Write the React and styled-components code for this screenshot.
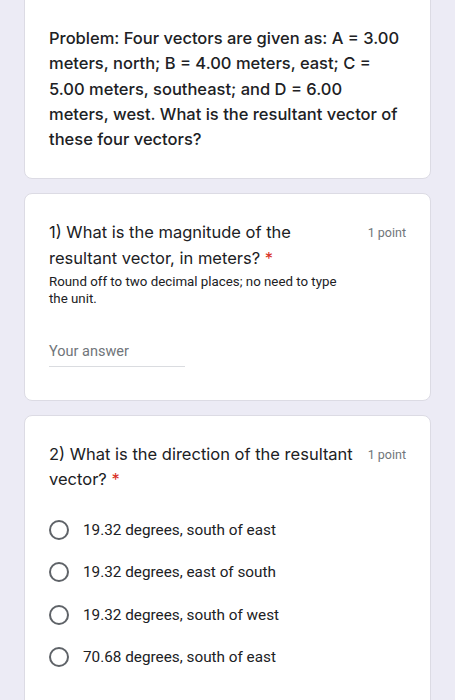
import React from 'react';
import styled, { createGlobalStyle } from 'styled-components';

const GlobalStyle = createGlobalStyle`
  html, body {
    margin: 0;
    padding: 0;
    background: #ecebf5;
  }
  body {
    font-family: 'Inter', 'Roboto', sans-serif;
    overflow: hidden;
  }
`;

const Page = styled.div`
  width: 455px;
  height: 700px;
  padding: 0 24px;
  box-sizing: border-box;
  display: flex;
  flex-direction: column;
  gap: 14px;
  overflow: hidden;
`;

const Card = styled.div`
  background: #ffffff;
  border: 1px solid #dcdbe4;
  border-radius: 8px;
  padding: ${(p) => p.$pad || '24px'};
  margin-top: ${(p) => p.$offset || '0'};
  flex-shrink: 0;
`;

const ProblemText = styled.div`
  font-family: 'Inter', sans-serif;
  font-size: 16.5px;
  font-weight: 500;
  line-height: 25.3px;
  color: #202124;
`;

const TitleRow = styled.div`
  display: flex;
  align-items: flex-start;
  justify-content: space-between;
  gap: 14px;
`;

const Title = styled.div`
  font-family: 'Inter', sans-serif;
  font-size: 16.5px;
  font-weight: 400;
  line-height: 25.3px;
  color: #202124;
  flex: 1;
`;

const Star = styled.span`
  color: #d93025;
`;

const Points = styled.div`
  font-family: 'Roboto', sans-serif;
  font-size: 12.5px;
  color: #70757a;
  line-height: 25.3px;
  white-space: nowrap;
`;

const Description = styled.div`
  font-family: 'Roboto', sans-serif;
  font-size: 13.3px;
  line-height: 17px;
  color: #202124;
  margin-top: 2px;
  max-width: 300px;
`;

const AnswerField = styled.div`
  margin-top: 36px;
  width: 136px;
  padding-bottom: 6px;
  border-bottom: 1px solid #dadce0;
  font-family: 'Roboto', sans-serif;
  font-size: 14.5px;
  color: #70757a;
`;

const Options = styled.div`
  display: flex;
  flex-direction: column;
  gap: 22.5px;
  margin-top: 27px;
`;

const Option = styled.label`
  display: flex;
  align-items: center;
  gap: 14px;
  font-family: 'Roboto', sans-serif;
  font-size: 15.3px;
  color: #202124;
  line-height: 20px;
`;

const Radio = styled.span`
  width: 16px;
  height: 16px;
  border: 2px solid #5f6368;
  border-radius: 50%;
  flex-shrink: 0;
`;

const options = [
  '19.32 degrees, south of east',
  '19.32 degrees, east of south',
  '19.32 degrees, south of west',
  '70.68 degrees, south of east',
];

export default function App() {
  return (
    <>
      <GlobalStyle />
      <Page>
        <Card $offset="-10px" $pad="35px 24px 26px">
          <ProblemText>
            Problem: Four vectors are given as: A = 3.00 meters, north; B = 4.00 meters, east; C = 5.00 meters, southeast; and D = 6.00 meters, west. What is the resultant vector of these four vectors?
          </ProblemText>
        </Card>

        <Card $pad="26px 24px 33px">
          <TitleRow>
            <Title>
              1) What is the magnitude of the resultant vector, in meters?{'\u00a0'}<Star>*</Star>
            </Title>
            <Points>1 point</Points>
          </TitleRow>
          <Description>Round off to two decimal places; no need to type the unit.</Description>
          <AnswerField>Your answer</AnswerField>
        </Card>

        <Card $pad="26px 24px 40px">
          <TitleRow>
            <Title>
              2) What is the direction of the resultant vector?{'\u00a0'}<Star>*</Star>
            </Title>
            <Points>1 point</Points>
          </TitleRow>
          <Options>
            {options.map((o) => (
              <Option key={o}>
                <Radio />
                {o}
              </Option>
            ))}
          </Options>
        </Card>
      </Page>
    </>
  );
}
